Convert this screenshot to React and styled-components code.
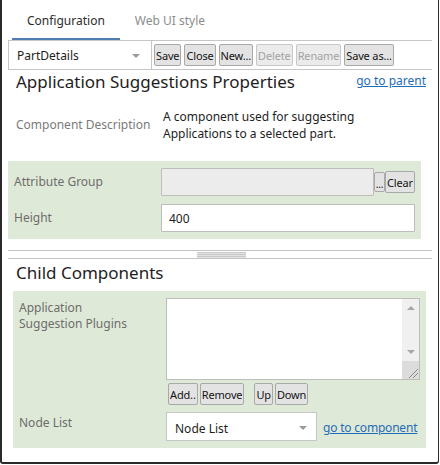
import React from "react";
import styled, { createGlobalStyle } from "styled-components";

const GlobalStyle = createGlobalStyle`
  html, body { margin: 0; padding: 0; background: #ffffff; }
  body { font-family: "Noto Sans", "Open Sans", sans-serif; font-size: 12px; color: #1e1e1e; }
  * { box-sizing: border-box; }
`;

const Window = styled.div`
  width: 439px;
  height: 464px;
  border-left: 2px solid #2a2a2a;
  border-right: 1px solid #2a2a2a;
  border-bottom: 2px solid #2a2a2a;
  border-radius: 0 0 3px 3px;
  padding: 0 5px 0 6px;
  background: #fff;
  display: flex;
  flex-direction: column;
`;

const Tabs = styled.div`
  display: flex;
  height: 40px;
  padding-left: 4px;
`;

const Tab = styled.div`
  display: flex;
  align-items: center;
  padding: 2px 15px 0;
  font-size: 12px;
  color: ${(p) => (p.$active ? "#2b2b2b" : "#8c8c8c")};
  border-bottom: 2px solid ${(p) => (p.$active ? "#4f7eb0" : "transparent")};
`;

const Toolbar = styled.div`
  display: flex;
  align-items: center;
  height: 30px;
  border-top: 1px solid #c6c6c6;
  border-bottom: 1px solid #c6c6c6;
  margin-right: 1px;
`;

const Combo = styled.div`
  align-self: stretch;
  width: 144px;
  border-left: 1px solid #c6c6c6;
  border-right: 1px solid #c6c6c6;
  display: flex;
  align-items: center;
  justify-content: space-between;
  padding: 1px 11px 0 8px;
  font-size: 12px;
  color: #1e1e1e;
`;

const Arrow = styled.span`
  width: 0;
  height: 0;
  border-left: 4px solid transparent;
  border-right: 4px solid transparent;
  border-top: 4px solid #9a9a9a;
`;

const ButtonGroup = styled.div`
  display: flex;
  align-items: center;
  gap: ${(p) => p.$gap || 3}px;
  margin-left: ${(p) => p.$indent || 0}px;
`;

const Btn = styled.button`
  font-family: inherit;
  font-size: 11px;
  letter-spacing: -0.15px;
  height: 22px;
  line-height: 19px;
  padding: 0 1px;
  margin: 0;
  border: 1px solid ${(p) => (p.disabled ? "#c8c8c8" : "#a9a9a9")};
  border-radius: 2px;
  background: ${(p) => (p.disabled ? "#ebebeb" : "#e3e3e3")};
  color: ${(p) => (p.disabled ? "#a3a3a3" : "#141414")};
  cursor: default;
`;

const DotsBtn = styled(Btn)`
  width: 11px;
  height: 20px;
  font-size: 10px;
  line-height: 22px;
  padding: 0;
`;

const HeaderRow = styled.div`
  display: flex;
  justify-content: space-between;
  align-items: flex-start;
  padding: ${(p) => (p.$top || 0)}px 7px 0 8px;
`;

const Heading = styled.h2`
  margin: 0;
  font-size: 17px;
  font-weight: 400;
  line-height: 24px;
  color: #1e1e1e;
`;

const Link = styled.a`
  color: #1f6cb8;
  text-decoration: underline;
  font-size: 12px;
  line-height: 17px;
  white-space: nowrap;
  letter-spacing: ${(p) => p.$ls || 0}px;
  margin-top: ${(p) => p.$top || 0}px;
  cursor: pointer;
`;

const DescRow = styled.div`
  display: grid;
  grid-template-columns: 147px 1fr;
  margin-top: 14px;
  padding-left: 8px;
`;

const Label = styled.div`
  color: ${(p) => (p.$light ? "#7a7a7a" : "#6d6d6d")};
  font-size: 12px;
  line-height: 16px;
  align-self: ${(p) => (p.$top ? "start" : "center")};
  padding-top: ${(p) => p.$pt || 0}px;
  margin-top: ${(p) => p.$mt || 0}px;
  max-width: ${(p) => p.$max || 147}px;
`;

const DescText = styled.div`
  font-size: 12px;
  line-height: 17px;
  color: #1e1e1e;
  width: 200px;
`;

const Section = styled.div`
  width: 413px;
  background: #dfe9d7;
  margin-top: ${(p) => p.$mt || 0}px;
  margin-left: ${(p) => p.$ml || 0}px;
  padding: 7px 6px 7px 6px;
  display: grid;
  grid-template-columns: 147px 1fr;
  row-gap: ${(p) => p.$gap || 8}px;
`;

const FieldLine = styled.div`
  display: flex;
  align-items: center;
  gap: ${(p) => p.$gap || 0}px;
  margin-top: ${(p) => p.$mt || 0}px;
`;

const TextInput = styled.div`
  flex: 1;
  height: 28px;
  border: 1px solid ${(p) => (p.$disabled ? "#bdbdbd" : "#bcbcbc")};
  background: ${(p) => (p.$disabled ? "#ececec" : "#ffffff")};
  border-radius: 1px;
  display: flex;
  align-items: center;
  padding: 1px 7px 0;
  font-size: 12px;
  color: #1e1e1e;
`;

const Splitter = styled.div`
  margin-top: 11px;
  height: 9px;
  border-top: 1px solid #c3c3c3;
  border-bottom: 1px solid #c3c3c3;
  display: flex;
  justify-content: center;
  align-items: center;
  margin-right: 1px;
`;

const Grip = styled.div`
  width: 49px;
  height: 6px;
  background: repeating-linear-gradient(
    to bottom,
    #c9c9c9 0px,
    #c9c9c9 1px,
    #e2e2e2 1px,
    #e2e2e2 2px
  );
  margin-left: 2px;
`;

const ListBox = styled.div`
  height: 82px;
  border: 1px solid #bdbdbd;
  background: #fff;
  display: flex;
  justify-content: flex-end;
`;

const ScrollBar = styled.div`
  width: 17px;
  background: #f0f0f0;
  display: flex;
  flex-direction: column;
  align-items: center;
`;

const ScrollArrow = styled.span`
  width: 0;
  height: 0;
  border-left: 4px solid transparent;
  border-right: 4px solid transparent;
  ${(p) =>
    p.$up
      ? "border-bottom: 4px solid #a6a6a6; margin-top: 7px;"
      : "border-top: 4px solid #a6a6a6; margin-top: auto; margin-bottom: 7px;"}
`;

const ResizeGrip = styled.div`
  width: 17px;
  height: 18px;
  background: #dcdcdc;
  display: flex;
  align-items: flex-end;
  justify-content: flex-end;
`;

const SelectBox = styled.div`
  width: 151px;
  height: 29px;
  flex-shrink: 0;
  border: 1px solid #c6c6c6;
  background: #fff;
  display: flex;
  align-items: center;
  justify-content: space-between;
  padding: 3px 9px 0 8px;
  font-size: 12px;
  color: #1e1e1e;
`;

const Spacer = styled.div``;

export default function App() {
  return (
    <>
      <GlobalStyle />
      <Window>
        <Tabs>
          <Tab $active>Configuration</Tab>
          <Tab>Web UI style</Tab>
        </Tabs>
        <Toolbar>
          <Combo>
            <span>PartDetails</span>
            <Arrow />
          </Combo>
          <ButtonGroup $indent={2}>
            <Btn>Save</Btn>
            <Btn>Close</Btn>
            <Btn>New...</Btn>
            <Btn disabled>Delete</Btn>
            <Btn disabled>Rename</Btn>
            <Btn>Save as...</Btn>
          </ButtonGroup>
        </Toolbar>
        <HeaderRow>
          <Heading>Application Suggestions Properties</Heading>
          <Link $top={2}>go to parent</Link>
        </HeaderRow>
        <DescRow>
          <Label $light>Component Description</Label>
          <DescText>
            A component used for suggesting Applications to a selected part.
          </DescText>
        </DescRow>
        <Section $mt={19} $gap={8}>
          <Label>Attribute Group</Label>
          <FieldLine>
            <TextInput $disabled />
            <DotsBtn>...</DotsBtn>
            <Btn>Clear</Btn>
          </FieldLine>
          <Label>Height</Label>
          <FieldLine>
            <TextInput>400</TextInput>
          </FieldLine>
        </Section>
        <Splitter>
          <Grip />
        </Splitter>
        <HeaderRow $top={2}>
          <Heading>Child Components</Heading>
        </HeaderRow>
        <Section $mt={6} $ml={5} $gap={3}>
          <Label $top $pt={2} $max={118}>
            Application Suggestion Plugins
          </Label>
          <ListBox>
            <ScrollBar>
              <ScrollArrow $up />
              <ScrollArrow />
              <ResizeGrip>
                <svg width="12" height="12" viewBox="0 0 12 12">
                  <line x1="2" y1="11" x2="11" y2="2" stroke="#8a8a8a" strokeWidth="1" />
                  <line x1="6" y1="11" x2="11" y2="6" stroke="#8a8a8a" strokeWidth="1" />
                </svg>
              </ResizeGrip>
            </ScrollBar>
          </ListBox>
          <Spacer />
          <FieldLine $gap={10}>
            <ButtonGroup $indent={2} $gap={2}>
              <Btn>Add..</Btn>
              <Btn>Remove</Btn>
            </ButtonGroup>
            <ButtonGroup $gap={2}>
              <Btn>Up</Btn>
              <Btn>Down</Btn>
            </ButtonGroup>
          </FieldLine>
          <Label $top $pt={3} $mt={4}>
            Node List
          </Label>
          <FieldLine $gap={6} $mt={4}>
            <SelectBox>
              <span>Node List</span>
              <Arrow />
            </SelectBox>
            <Link $ls={-0.2} $top={2}>go to component</Link>
          </FieldLine>
        </Section>
      </Window>
    </>
  );
}
